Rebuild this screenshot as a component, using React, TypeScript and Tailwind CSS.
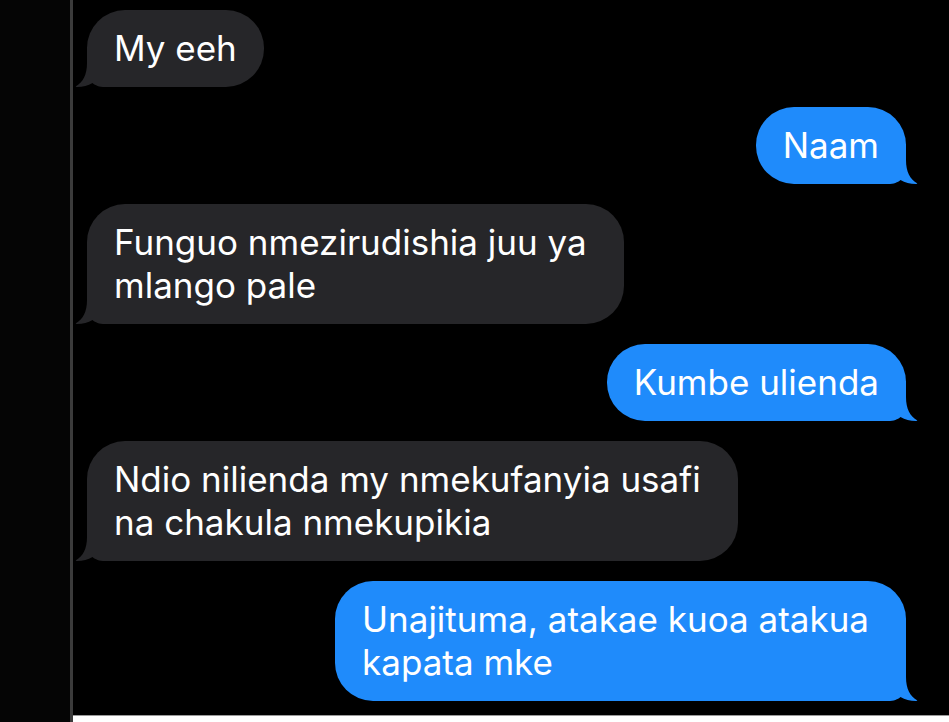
import type { JSX } from 'react';

type Msg = { id: number; from: 'them' | 'me'; lines: string[] };

const messages: Msg[] = [
  { id: 1, from: 'them', lines: ['My eeh'] },
  { id: 2, from: 'me', lines: ['Naam'] },
  { id: 3, from: 'them', lines: ['Funguo nmezirudishia juu ya', 'mlango pale'] },
  { id: 4, from: 'me', lines: ['Kumbe ulienda'] },
  { id: 5, from: 'them', lines: ['Ndio nilienda my nmekufanyia usafi', 'na chakula nmekupikia'] },
  { id: 6, from: 'me', lines: ['Unajituma, atakae kuoa atakua', 'kapata mke'] },
];

// iMessage-style tail, drawn for the left side; mirrored for sent bubbles
function Tail({ color, side }: { color: string; side: 'left' | 'right' }): JSX.Element {
  return (
    <svg
      width="52"
      height="40"
      viewBox="0 0 52 40"
      className={
        side === 'left'
          ? 'absolute bottom-0 -left-[12px]'
          : 'absolute bottom-0 -right-[12px] -scale-x-100'
      }
    >
      <path
        d="M12 0 L12 16 C12 28 8 35 1 39.3 Q0 40 2 40 C8 40 13 38.5 17.5 36 C20.5 38.5 24 40 30 40 L52 40 L52 0 Z"
        fill={color}
      />
    </svg>
  );
}

function Bubble({ msg }: { msg: Msg }): JSX.Element {
  const mine = msg.from === 'me';
  const color = mine ? '#1f8bfb' : '#262629';
  const multi = msg.lines.length > 1;
  return (
    <div className={mine ? 'flex justify-end' : 'flex justify-start'}>
      <div
        className={`relative rounded-[38px] py-[17px] pl-[27px] text-[35px] leading-[43px] text-white ${
          multi ? 'pr-[37px]' : 'pr-[27px]'
        } ${mine ? 'bg-[#1f8bfb]' : 'bg-[#262629]'}`}
      >
        <Tail color={color} side={mine ? 'right' : 'left'} />
        <div className="relative whitespace-nowrap">
          {msg.lines.map((l) => (
            <div key={l}>{l}</div>
          ))}
        </div>
      </div>
    </div>
  );
}

export default function App(): JSX.Element {
  return (
    <div
      className="flex h-[722px] w-[949px] overflow-hidden bg-black"
      style={{ fontFamily: 'Inter, "Liberation Sans", sans-serif' }}
    >
      <div className="w-[70px] shrink-0 bg-[#050505]" />
      <div className="w-[3px] shrink-0 bg-[#3b3b3b]" />
      <div className="flex flex-1 flex-col">
        <div className="flex h-[715px] flex-col gap-[20px] pb-[13px] pl-[14px] pr-[43px] pt-[10px]">
          {messages.map((m) => (
            <Bubble key={m.id} msg={m} />
          ))}
        </div>
        <div className="h-[7px] border-t border-[#9a9a9a] bg-white" />
      </div>
    </div>
  );
}
